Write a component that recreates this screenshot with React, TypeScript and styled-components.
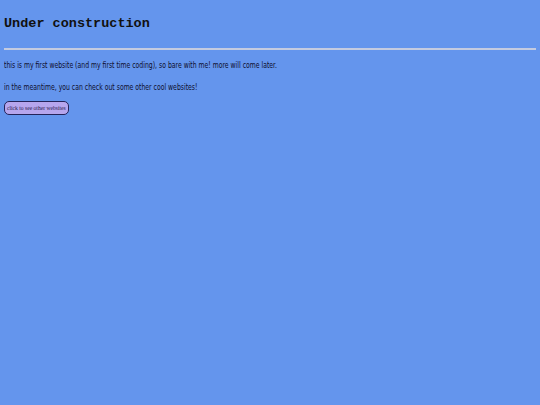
import React from 'react'
import styled, { createGlobalStyle } from 'styled-components'

const GlobalStyle = createGlobalStyle`
    html, body {
        margin: 0;
        background-color: cornflowerblue;
    }
    body {
        padding: 4px;
    }
`

const Page = styled.main`
    display: flex;
    flex-direction: column;
    align-items: flex-start;
`

const Title = styled.h1`
    margin: 12px 0 0;
    font-family: "Liberation Mono", "Courier New", monospace;
    font-size: 13.5px;
    font-weight: bold;
    line-height: 16px;
    color: #111;
`

const Divider = styled.hr`
    align-self: stretch;
    margin: 16px 0 0;
    border: none;
    height: 2px;
    background-color: #c4cbe0;
`

// narrow sans body copy, squeezed horizontally since no condensed face is around
const Paragraph = styled.p`
    margin: ${(p: { $top: number }) => p.$top}px 0 0;
    width: max-content;
    font-family: "DejaVu Sans", sans-serif;
    font-size: 9.5px;
    line-height: 10px;
    color: #0e0e2c;
    transform: scaleX(0.645);
    transform-origin: left center;
`

const LinkButton = styled.button`
    margin-top: 9px;
    padding: 0 2px;
    height: 14px;
    font-family: "Liberation Serif", "Times New Roman", serif;
    font-size: 5.6px;
    color: #2a2050;
    background-color: #b6a6ee;
    border: 1.5px solid #23235a;
    border-radius: 5px;
    cursor: pointer;
`

const App = () => {
    return (
        <>
            <GlobalStyle />
            <Page>
                <Title>Under construction</Title>
                <Divider />
                <Paragraph $top={10}>
                    this is my first website (and my first time coding), so bare with me! more will come later.
                </Paragraph>
                <Paragraph $top={12}>in the meantime, you can check out some other cool websites!</Paragraph>
                <LinkButton>click to see other websites</LinkButton>
            </Page>
        </>
    )
}

export default App
